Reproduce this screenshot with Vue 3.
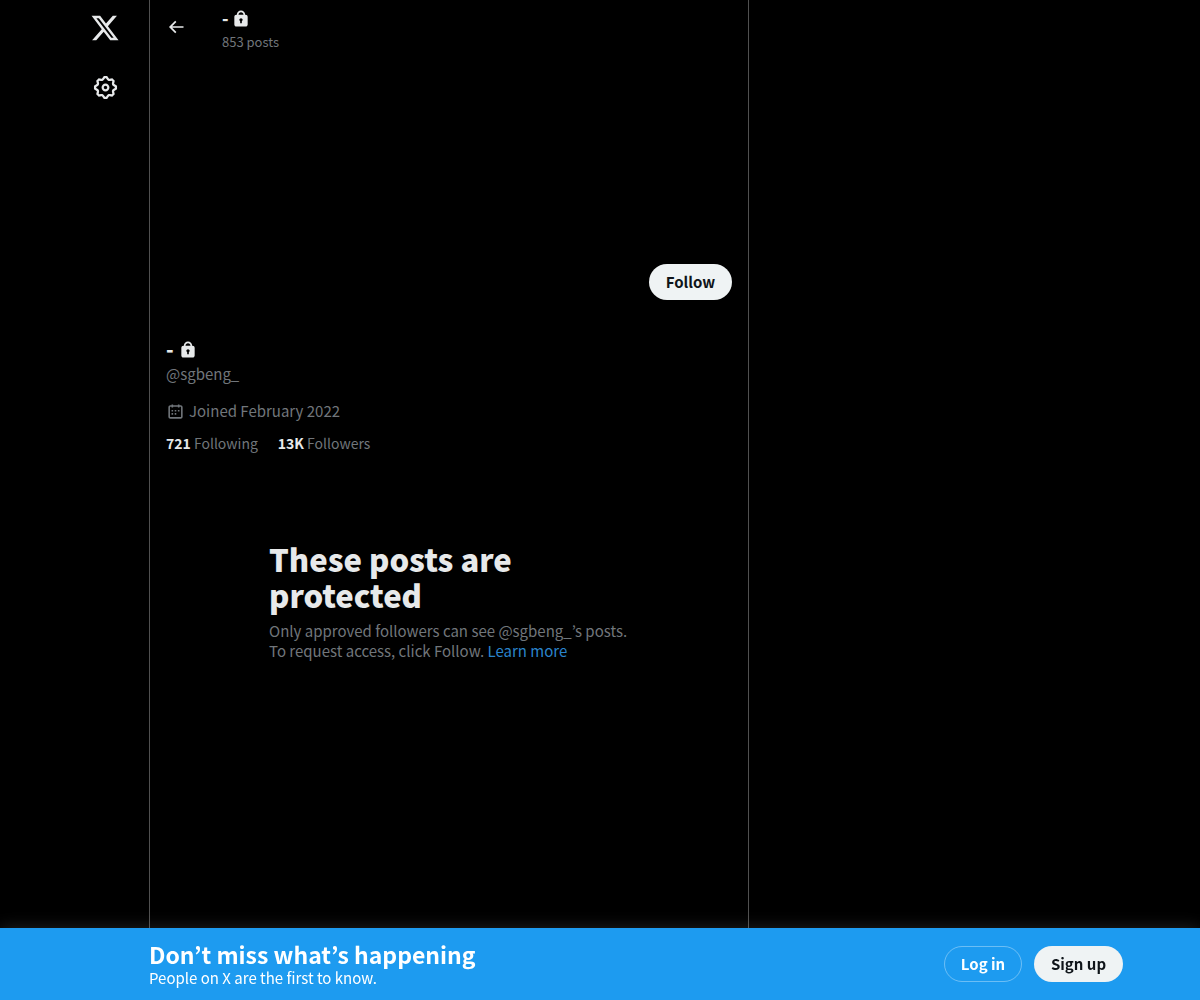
<script setup>
const xLogo = "M18.244 2.25h3.308l-7.227 8.26 8.502 11.24H16.17l-5.214-6.817L4.99 21.75H1.68l7.73-8.835L1.254 2.25H8.08l4.713 6.231zm-1.161 17.52h1.833L7.084 4.126H5.117z";
const cog = "M10.54 1.75h2.92l1.57 2.36c.11.17.32.25.53.21l2.53-.59 2.17 2.17-.58 2.54c-.05.2.04.41.21.53l2.36 1.57v2.92l-2.36 1.57c-.17.12-.26.33-.21.53l.58 2.54-2.17 2.17-2.53-.59c-.21-.04-.42.04-.53.21l-1.57 2.36h-2.92l-1.58-2.36c-.11-.17-.32-.25-.52-.21l-2.54.59-2.17-2.17.58-2.54c.05-.2-.03-.41-.21-.53l-2.35-1.57v-2.92L4.1 8.97c.18-.12.26-.33.21-.53L3.73 5.9 5.9 3.73l2.54.59c.2.04.41-.04.52-.21l1.58-2.36zm1.07 2l-.98 1.47C10.05 6.08 9 6.5 7.99 6.27l-1.46-.34-.6.6.33 1.46c.24 1.01-.18 2.07-1.05 2.64l-1.46.98v.78l1.46.98c.87.57 1.29 1.63 1.05 2.64l-.33 1.46.6.6 1.46-.34c1.01-.23 2.06.19 2.64 1.05l.98 1.47h.78l.97-1.47c.58-.86 1.63-1.28 2.65-1.05l1.45.34.61-.6-.34-1.46c-.23-1.01.18-2.07 1.05-2.64l1.47-.98v-.78l-1.47-.98c-.87-.57-1.28-1.63-1.05-2.64l.34-1.46-.61-.6-1.45.34c-1.02.23-2.07-.19-2.65-1.05l-.97-1.47h-.78zM12 10.5c-.83 0-1.5.67-1.5 1.5s.67 1.5 1.5 1.5c.82 0 1.5-.67 1.5-1.5s-.68-1.5-1.5-1.5zM8.5 12c0-1.93 1.56-3.5 3.5-3.5 1.93 0 3.5 1.57 3.5 3.5s-1.57 3.5-3.5 3.5c-1.94 0-3.5-1.57-3.5-3.5z";
const back = "M7.414 13l5.043 5.04-1.414 1.42L3.586 12l7.457-7.46 1.414 1.42L7.414 11H21v2H7.414z";
const lock = "M17.5 7H17v-.25c0-2.76-2.24-5-5-5s-5 2.24-5 5V7h-.5C5.12 7 4 8.12 4 9.5v9C4 19.88 5.12 21 6.5 21h11c1.39 0 2.5-1.12 2.5-2.5v-9C20 8.12 18.89 7 17.5 7zM13 14.73V17h-2v-2.27c-.59-.34-1-.99-1-1.73 0-1.1.9-2 2-2 1.11 0 2 .9 2 2 0 .74-.4 1.39-1 1.73zM15 7H9v-.25c0-1.66 1.35-3 3-3 1.66 0 3 1.34 3 3V7z";
const cal = "M7 4V3h2v1h6V3h2v1h1.5C19.89 4 21 5.12 21 6.5v12c0 1.38-1.11 2.5-2.5 2.5h-13C4.12 21 3 19.88 3 18.5v-12C3 5.12 4.12 4 5.5 4H7zm0 2H5.5c-.27 0-.5.22-.5.5v12c0 .28.23.5.5.5h13c.28 0 .5-.22.5-.5v-12c0-.28-.22-.5-.5-.5H17v1h-2V6H9v1H7V6zm0 6h2v-2H7v2zm0 4h2v-2H7v2zm4-4h2v-2h-2v2zm0 4h2v-2h-2v2zm4-4h2v-2h-2v2z";
</script>

<template>
  <div class="page">
    <nav class="side">
      <svg class="logo" viewBox="0 0 24 24"><path :d="xLogo" /></svg>
      <svg class="cog" viewBox="0 0 24 24"><path :d="cog" /></svg>
    </nav>
    <main class="col">
      <header class="head">
        <svg class="back" viewBox="0 0 24 24"><path :d="back" /></svg>
        <div class="head-text">
          <div class="head-name">- <svg class="lock" viewBox="0 0 24 24"><path :d="lock" /></svg></div>
          <div class="head-count">853 posts</div>
        </div>
      </header>
      <div class="banner"></div>
      <div class="actions"><button class="follow">Follow</button></div>
      <section class="profile">
        <div class="name">- <svg class="lock" viewBox="0 0 24 24"><path :d="lock" /></svg></div>
        <div class="handle">@sgbeng_</div>
        <div class="joined">
          <svg class="cal" viewBox="0 0 24 24"><path :d="cal" /></svg>
          <span>Joined February 2022</span>
        </div>
        <div class="stats">
          <span><b>721</b> Following</span>
          <span><b>13K</b> Followers</span>
        </div>
      </section>
      <section class="empty">
        <h2>These posts are protected</h2>
        <p>Only approved followers can see @sgbeng_’s posts.<br />To request access, click Follow. <a>Learn more</a></p>
      </section>
    </main>
    <footer class="bar">
      <div class="bar-text">
        <div class="bar-title">Don’t miss what’s happening</div>
        <div class="bar-sub">People on X are the first to know.</div>
      </div>
      <div class="bar-btns">
        <button class="login">Log in</button>
        <button class="signup">Sign up</button>
      </div>
    </footer>
  </div>
</template>

<style>
html, body { margin: 0; background: #000; }
</style>

<style scoped>
.page {
  height: 1000px;
  overflow: hidden;
  display: flex;
  background: #000;
  color: #e7e9ea;
  font-family: "Noto Sans CJK JP", "Noto Sans", sans-serif;
}
svg { fill: currentColor; display: block; }
.side {
  width: 149px;
  flex: none;
  display: flex;
  flex-direction: column;
  align-items: flex-end;
  padding: 13px 30px 0 0;
  box-sizing: border-box;
  color: #e7e9ea;
}
.logo { width: 30px; height: 30px; margin-right: -0.5px; }
.cog { width: 27px; height: 27px; margin-top: 30.5px; margin-right: 0.5px; }
.col {
  width: 600px;
  height: 928px;
  flex: none;
  box-sizing: border-box;
  border-left: 1px solid #505050;
  border-right: 1px solid #505050;
}
.head {
  height: 53px;
  display: flex;
  padding-left: 16px;
}
.back { width: 20px; height: 20px; margin-top: 17px; }
.head-text { margin-left: 36px; padding-top: 6px; }
.head-name { display: flex; align-items: center; gap: 2px; font-size: 17px; font-weight: 800; line-height: 24px; height: 24px; }
.head-count { font-size: 13px; line-height: 16px; color: #71767b; margin-top: 4px; }
.banner { height: 211px; }
.actions { display: flex; justify-content: flex-end; padding-right: 16px; }
.follow {
  width: 83px; height: 36px; border: 0; border-radius: 18px; padding: 0;
  background: #eff3f4; color: #0f1419;
  font: 700 15px/20px "Noto Sans CJK JP", sans-serif;
}
.profile { padding: 35px 16px 0; }
.name { display: flex; align-items: center; gap: 4px; font-size: 20px; font-weight: 800; line-height: 28px; height: 28px; }
.lock { width: 20px; height: 20px; margin-top: 2.5px; }
.handle { font-size: 15px; line-height: 20px; color: #71767b; margin-top: 1px; }
.joined { display: flex; align-items: center; gap: 4px; margin-top: 17px; font-size: 15px; line-height: 20px; color: #71767b; }
.cal { width: 19px; height: 19px; }
.stats { display: flex; gap: 20px; margin-top: 12px; font-size: 14px; line-height: 20px; color: #71767b; }
.stats b { color: #e7e9ea; font-weight: 700; }
.empty { width: 362px; margin: 88px 0 0 119px; }
.empty h2 { margin: 0; font-size: 31px; line-height: 36px; font-weight: 900; color: #e7e9ea; max-width: 340px; }
.empty p { margin: 8px 0 0; font-size: 15px; line-height: 20px; color: #71767b; }
.empty a { color: #2a84cc; }
.bar {
  position: fixed; left: 0; right: 0; bottom: 0; height: 72px;
  background: #1d9bf0; color: #fff;
  display: flex; align-items: center; justify-content: space-between;
  padding: 0 77px 0 149px; box-sizing: border-box;
  box-shadow: 0 0 16px rgba(255,255,255,.14);
}
.bar-title { font-size: 23px; font-weight: 700; line-height: 26px; margin-bottom: 2px; }
.bar-sub { font-size: 15px; line-height: 18px; }
.bar-btns { display: flex; gap: 12px; }
.login, .signup {
  height: 36px; border-radius: 18px; padding: 0;
  font: 700 15px/20px "Noto Sans CJK JP", sans-serif; box-sizing: border-box;
}
.login { width: 78px; background: transparent; border: 1px solid rgba(255,255,255,.35); color: #fff; }
.signup { width: 89px; background: #eff3f4; border: 0; color: #0f1419; }
</style>
